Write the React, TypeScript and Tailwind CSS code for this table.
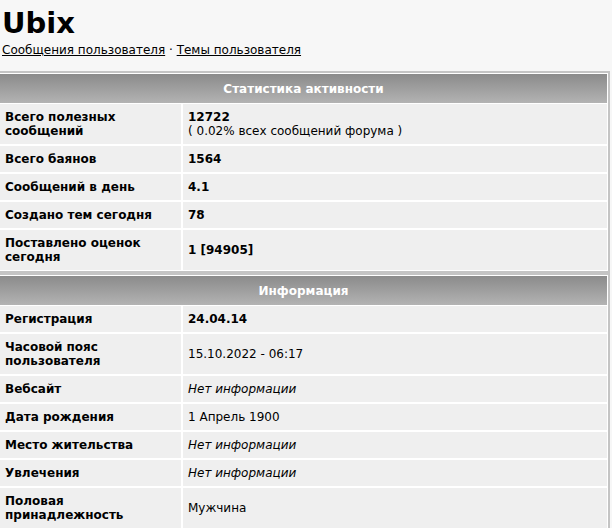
import * as React from 'react';

interface Row {
    label: string;
    value: React.ReactNode;
}

const STATS: Row[] = [
    {
        label: 'Всего полезных сообщений',
        value: (
            <>
                <b>12722</b>
                <br />( 0.02% всех сообщений форума )
            </>
        ),
    },
    { label: 'Всего баянов', value: <b>1564</b> },
    { label: 'Сообщений в день', value: <b>4.1</b> },
    { label: 'Создано тем сегодня', value: <b>78</b> },
    { label: 'Поставлено оценок сегодня', value: <b>1 [94905]</b> },
];

const INFO: Row[] = [
    { label: 'Регистрация', value: <b>24.04.14</b> },
    { label: 'Часовой пояс пользователя', value: '15.10.2022 - 06:17' },
    { label: 'Вебсайт', value: <i>Нет информации</i> },
    { label: 'Дата рождения', value: '1 Апрель 1900' },
    { label: 'Место жительства', value: <i>Нет информации</i> },
    { label: 'Увлечения', value: <i>Нет информации</i> },
    { label: 'Половая принадлежность', value: 'Мужчина' },
];

function Block({ title, rows }: { title: string; rows: Row[] }) {
    return (
        <div className="-ml-[3px] w-[613px] border-2 border-[#c4c4c4] bg-white p-px">
            <div className="flex h-[29px] items-center justify-center bg-gradient-to-b from-[#8b8b8b] to-[#b3b3b3] text-[12px] font-bold text-white">
                {title}
            </div>
            <div className="mt-px grid grid-cols-[181px_1fr] gap-[2px]">
                {rows.map((r, i) => (
                    <React.Fragment key={i}>
                        <div className="flex items-center bg-[#efefef] py-[6px] pl-[5px] pr-[10px] font-bold leading-[14px]">
                            {r.label}
                        </div>
                        <div className="flex items-center bg-[#efefef] py-[6px] pl-[5px] leading-[14px]">
                            <div>{r.value}</div>
                        </div>
                    </React.Fragment>
                ))}
            </div>
        </div>
    );
}

export default function App() {
    return (
        <div
            className="min-h-[528px] overflow-hidden bg-[#f7f7f7] text-[12px] text-black"
            style={{ fontFamily: '"DejaVu Sans", Verdana, sans-serif' }}
        >
            <div className="px-[2px] pt-[6px]">
                <h1 className="text-[29px] font-bold leading-[34px]">Ubix</h1>
                <div className="mt-[2px] leading-[16px]">
                    <a href="#" className="underline">Сообщения пользователя</a> ·{' '}
                    <a href="#" className="underline">Темы пользователя</a>
                </div>
            </div>
            <div className="mt-[13px] flex flex-col">
                <Block title="Статистика активности" rows={STATS} />
                <Block title="Информация" rows={INFO} />
            </div>
        </div>
    );
}
